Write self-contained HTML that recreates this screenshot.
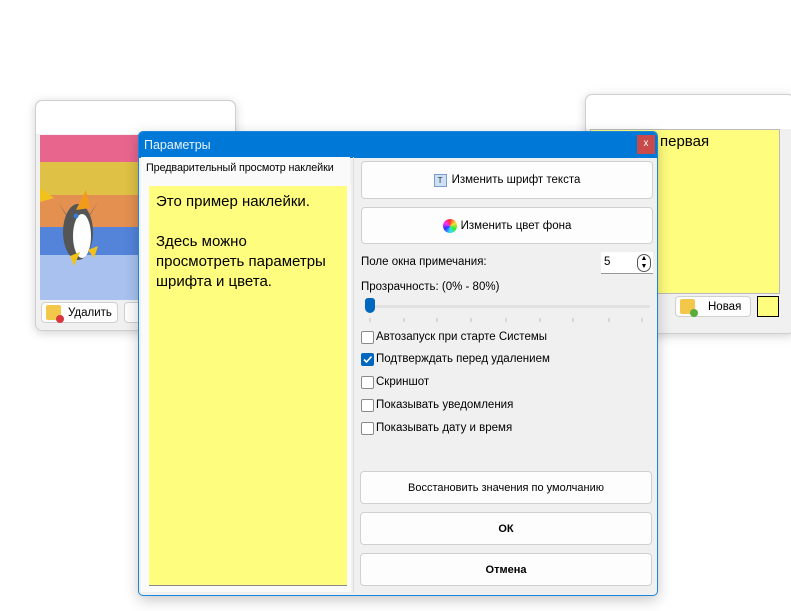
<!DOCTYPE html>
<html><head><meta charset="utf-8"><style>
*{box-sizing:border-box;margin:0;padding:0}
body{width:791px;height:611px;background:#fff;position:relative;overflow:hidden;font-family:"Liberation Sans","DejaVu Sans",sans-serif;font-size:11.5px;color:#000}
.abs{position:absolute}
.win{position:absolute;background:#f0f0f0;border:1px solid #cfcfcf;border-radius:7px;box-shadow:0 2px 10px rgba(0,0,0,.18)}
.btn{position:absolute;background:#fdfdfd;border:1px solid #d0d0d0;border-radius:4px;display:flex;align-items:center;justify-content:center;font-size:11.5px}
.hand{font-family:"Comic Sans MS","Liberation Sans",sans-serif;}
.cb{position:absolute;left:361px;width:13px;height:13px;border:1px solid #8a8a8a;background:#fff;border-radius:2px}
.cbl{position:absolute;left:376px;font-size:11.5px}
.sq{display:inline-block;width:15px;height:15px;background:#f3c84a;border-radius:2px;position:relative;margin-right:7px}
</style></head><body>

<div class="win" style="left:35px;top:100px;width:201px;height:231px;background:#f0f0f0">
  <div class="abs" style="left:0;top:0;width:199px;height:33px;background:#fff;border-radius:7px 7px 0 0"></div>
</div>
<div class="abs" style="left:40px;top:135px;width:110px;height:27px;background:#e8668e"></div>
<div class="abs" style="left:40px;top:162px;width:110px;height:33px;background:#dfc145"></div>
<div class="abs" style="left:40px;top:195px;width:110px;height:32px;background:#e39050"></div>
<div class="abs" style="left:40px;top:227px;width:110px;height:28px;background:#5384da"></div>
<div class="abs" style="left:40px;top:255px;width:110px;height:45px;background:#a8c1ef"></div>
<svg class="abs" style="left:36px;top:180px" width="70" height="90">
  <polygon points="4,8 18,18 4,22" fill="#f2c21a"/>
  <ellipse cx="42" cy="52" rx="15" ry="28" fill="#555"/>
  <polygon points="30,35 22,22 34,40" fill="#555"/>
  <polygon points="54,35 62,22 50,40" fill="#555"/>
  <ellipse cx="46" cy="56" rx="9" ry="22" fill="#fff"/>
  <polygon points="40,30 50,10 54,28" fill="#f29a1a"/>
  <circle cx="40" cy="36" r="2.5" fill="#3a7ad0"/>
  <polygon points="34,76 44,72 38,86" fill="#f2c21a"/>
  <polygon points="52,70 62,66 58,78" fill="#f2c21a"/>
</svg>
<div class="btn" style="left:41px;top:302px;width:77px;height:21px;justify-content:flex-start;padding-left:4px"><span class="sq"><span class="abs" style="right:-3px;bottom:-3px;width:8px;height:8px;border-radius:50%;background:#d9363e"></span></span>Удалить</div>
<div class="btn" style="left:124px;top:302px;width:20px;height:21px"></div>

<div class="win" style="left:585px;top:94px;width:210px;height:240px">
  <div class="abs" style="left:0;top:0;width:208px;height:34px;background:#fff;border-radius:7px 7px 0 0"></div>
</div>
<div class="abs" style="left:590px;top:129px;width:190px;height:165px;background:#fffd7e;border:1px solid #bbb"></div>
<div class="abs hand" style="left:660px;top:133px;font-size:15px">первая</div>
<div class="btn" style="left:675px;top:296px;width:76px;height:21px;justify-content:flex-start;padding-left:4px"><span class="sq"><span class="abs" style="right:-3px;bottom:-3px;width:8px;height:8px;border-radius:50%;background:#5aac3a"></span></span><span style="margin-left:6px">Новая</span></div>
<div class="abs" style="left:757px;top:296px;width:22px;height:21px;background:#fffd7e;border:1px solid #000"></div>

<div class="abs" style="left:138px;top:131px;width:520px;height:465px;background:#f0f0f0;border:1px solid #1a86d8;border-radius:5px;box-shadow:0 4px 14px rgba(0,0,0,.22);overflow:hidden">
  <div class="abs" style="left:0;top:0;width:520px;height:26px;background:#0078d7"></div>
  <div class="abs" style="left:5px;top:6px;color:#e8f2fb;font-size:12.5px">Параметры</div>
  <div class="abs" style="left:498px;top:3px;width:18px;height:19px;background:#c94a4a;color:#fff;font-size:10px;text-align:center;line-height:18px">x</div>
</div>
<div class="abs" style="left:141px;top:157px;width:209px;height:28px;background:#fafafa"></div>
<div class="abs" style="left:146px;top:162px;font-size:10.8px;letter-spacing:-0.1px">Предварительный просмотр наклейки</div>
<div class="abs" style="left:141px;top:184px;width:210px;height:408px;background:#fafafa"></div>
<div class="abs" style="left:353px;top:157px;width:1px;height:436px;background:#dcdcdc"></div>
<div class="abs hand" style="left:149px;top:186px;width:198px;height:400px;background:#fffd7e;border-bottom:1px solid #888;padding:6px 7px;font-size:15px;line-height:20px;white-space:nowrap">Это пример наклейки.<br><br>Здесь можно<br>просмотреть параметры<br>шрифта и цвета.</div>

<div class="btn" style="left:361px;top:161px;width:292px;height:38px"><span style="display:inline-block;width:13px;height:13px;background:#cfe0f5;border:1px solid #7a9cc8;margin-right:5px;font-size:8px;line-height:11px;text-align:center;color:#234">T</span>Изменить шрифт текста</div>
<div class="btn" style="left:361px;top:207px;width:292px;height:37px"><span style="display:inline-block;width:14px;height:14px;border-radius:50%;background:conic-gradient(#f33,#fd3,#3e3,#3df,#33f,#f3f,#f33);margin-right:4px"></span>Изменить цвет фона</div>

<div class="abs" style="left:361px;top:256px">Поле окна примечания:</div>
<div class="abs" style="left:601px;top:252px;width:52px;height:22px;background:#fff;border-bottom:1px solid #999"></div>
<div class="abs" style="left:604px;top:256px">5</div>
<div class="abs" style="left:637px;top:254px;width:14px;height:18px;border:1px solid #555;border-radius:7px;font-size:7px;line-height:8px;text-align:center">▲<br>▼</div>

<div class="abs" style="left:361px;top:281px">Прозрачность: (0% - 80%)</div>
<div class="abs" style="left:364px;top:305px;width:286px;height:3px;background:#e2e2e2;border-radius:2px"></div>
<div class="abs" style="left:365px;top:298px;width:10px;height:15px;background:#0067c0;border-radius:3px 3px 5px 5px"></div>
<svg class="abs" style="left:369px;top:318px" width="285" height="6"><g stroke="#bbb"><line x1="1" y1="0" x2="1" y2="4"/><line x1="35" y1="0" x2="35" y2="4"/><line x1="68" y1="0" x2="68" y2="4"/><line x1="102" y1="0" x2="102" y2="4"/><line x1="137" y1="0" x2="137" y2="4"/><line x1="171" y1="0" x2="171" y2="4"/><line x1="204" y1="0" x2="204" y2="4"/><line x1="240" y1="0" x2="240" y2="4"/><line x1="273" y1="0" x2="273" y2="4"/></g></svg>

<div class="cb" style="top:331px"></div><div class="cbl" style="top:331px">Автозапуск при старте Системы</div>
<div class="cb" style="top:353px;background:#0067c0;border-color:#0067c0"><svg width="11" height="11" style="position:absolute;left:0;top:0"><path d="M2 5.5 L4.5 8 L9.5 2.5" stroke="#fff" stroke-width="1.6" fill="none"/></svg></div><div class="cbl" style="top:353px">Подтверждать перед удалением</div>
<div class="cb" style="top:376px"></div><div class="cbl" style="top:376px">Скриншот</div>
<div class="cb" style="top:399px"></div><div class="cbl" style="top:399px">Показывать уведомления</div>
<div class="cb" style="top:422px"></div><div class="cbl" style="top:422px">Показывать дату и время</div>

<div class="btn" style="left:360px;top:471px;width:292px;height:33px;font-size:11px">Восстановить значения по умолчанию</div>
<div class="btn" style="left:360px;top:512px;width:292px;height:33px;font-weight:bold;font-size:11px">ОК</div>
<div class="btn" style="left:360px;top:553px;width:292px;height:33px;font-weight:bold;font-size:11px">Отмена</div>
</body></html>
